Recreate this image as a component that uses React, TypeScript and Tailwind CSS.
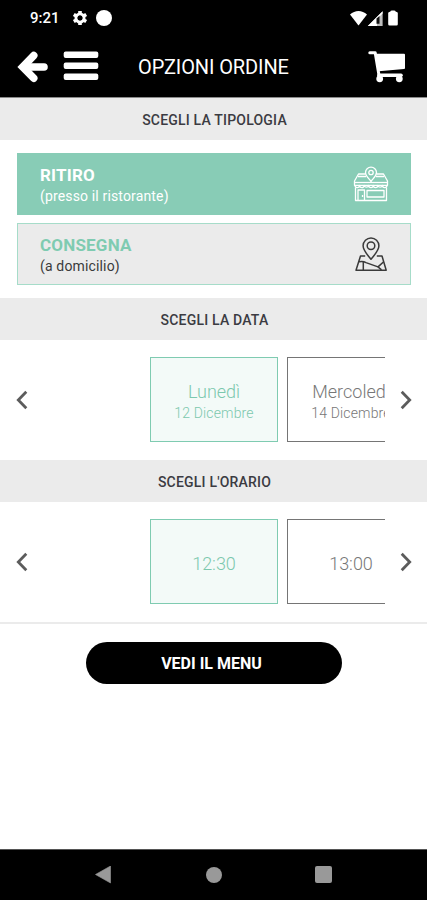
import { useState } from 'react'
import clsx from 'clsx'

interface Slot {
  id: string
  title: string
  subtitle?: string
}

const DATES: Slot[] = [
  { id: '12', title: 'Lunedì', subtitle: '12 Dicembre' },
  { id: '14', title: 'Mercoledì', subtitle: '14 Dicembre' },
]

const TIMES: Slot[] = [
  { id: '1230', title: '12:30' },
  { id: '1300', title: '13:00' },
]

function StatusBar() {
  return (
    <div className="flex h-9 items-center pl-[30px] pr-[29px] text-white">
      <span className="w-[42px] text-[15px] font-medium">9:21</span>
      <svg className="h-4 w-4" viewBox="0 0 16 16">
        <circle cx="8" cy="8" r="4" fill="none" stroke="currentColor" strokeWidth="3" />
        <g stroke="currentColor" strokeWidth="3.6">
          <path d="M8 .9v3M8 12.1v3M1.8 4.45l2.6 1.5M11.6 10.05l2.6 1.5M1.8 11.55l2.6-1.5M11.6 5.95l2.6-1.5" />
        </g>
        <circle cx="8" cy="8" r="2.4" fill="#000" />
      </svg>
      <span className="ml-2 h-4 w-4 rounded-full bg-white" />
      <svg className="ml-auto h-[15px] w-[17px]" viewBox="0 0 17 15">
        <path d="M0 3.6C5-1.1 12-1.1 17 3.6L8.5 14.5z" fill="currentColor" />
      </svg>
      <svg className="h-[15px] w-4" viewBox="0 0 16 15">
        <path d="M.8 15L15.6.3V15z" fill="#bdbdbd" />
        <path d="M.8 15L15.6.3v2.2L10 8v7z" fill="#fff" />
        <path d="M9.5 7.5L12.5 5v7.8h-3z" fill="#111" />
      </svg>
      <svg className="ml-[5px] h-4 w-[10px]" viewBox="0 0 10 16">
        <path d="M2.2 1.7Q2.5.5 4 .5h2q1.5 0 1.8 1.2A1.8 1.8 0 0 1 9.8 3.8v10.4A1.3 1.3 0 0 1 8.5 15.5h-7A1.3 1.3 0 0 1 .2 14.2V3.8A1.8 1.8 0 0 1 2.2 1.7z" fill="currentColor" />
      </svg>
    </div>
  )
}

function Header() {
  return (
    <div className="flex h-[61px] items-center pl-[17px] pr-[21px] text-white">
      <button aria-label="Indietro">
        <svg className="h-8 w-8" viewBox="0 0 32 32" fill="none" stroke="currentColor" strokeWidth="7.6" strokeLinecap="round">
          <path d="M16.7 4.6L5.7 16l11 11.2" />
          <path d="M8 16h19" />
        </svg>
      </button>
      <button aria-label="Menu" className="ml-[14px]">
        <svg className="h-8 w-9" viewBox="0 0 36 32" fill="currentColor">
          <rect x=".7" y=".5" width="34.6" height="6.4" rx="2" />
          <rect x=".7" y="11.5" width="34.6" height="6.6" rx="2" />
          <rect x=".7" y="22.5" width="34.6" height="6.6" rx="2" />
        </svg>
      </button>
      <h1 className="ml-[39px] whitespace-nowrap text-[20px] tracking-[-0.1px]">OPZIONI ORDINE</h1>
      <button aria-label="Carrello" className="ml-auto">
        <svg className="h-8 w-[38px]" viewBox="0 0 38 32" fill="none" stroke="currentColor">
          <path d="M1.8 1.8h5.4l4 23.7" strokeWidth="3" strokeLinecap="round" strokeLinejoin="round" />
          <path d="M8 2.8H36a1 1 0 0 1 1 1v13.2a1 1 0 0 1-.9 1L10.8 20.3z" fill="currentColor" stroke="none" />
          <path d="M11 24.2h22" strokeWidth="3.6" strokeLinecap="round" />
          <circle cx="11.7" cy="27.8" r="3.4" fill="currentColor" stroke="none" />
          <circle cx="31.3" cy="27.8" r="3.4" fill="currentColor" stroke="none" />
        </svg>
      </button>
    </div>
  )
}

function SectionTitle({ children }: { children: string }) {
  return (
    <h2 className="flex h-[42px] items-center justify-center bg-[#ebebeb] pl-[2px] pt-[2px] text-[14px] font-medium tracking-[0.2px] text-[#3b3b42]">
      {children}
    </h2>
  )
}

function StoreIcon() {
  return (
    <svg className="h-9 w-9" viewBox="0 0 36 36" fill="none" stroke="currentColor" strokeWidth="1.3" strokeLinejoin="round">
      <path d="M12.5 8H5.5L1.500 15v4.300h33V15L30.500 8h-7" />
      <path d="M5 10.500h8M23 10.500h8" />
      <path d="M18 15.500c-2.500-3.500-5.500-5.500-5.500-8.900a5.500 5.500 0 0 1 11 0c0 3.400-3 5.400-5.500 8.900z" />
      <circle cx="18" cy="6.5" r="2.2" />
      <path d="M2 16.500h32" />
      <path d="M2 19.3a2.3 2.3 0 0 0 4.6 0 2.3 2.3 0 0 0 4.6 0 2.3 2.3 0 0 0 4.5 0 2.3 2.3 0 0 0 4.6 0 2.3 2.3 0 0 0 4.6 0 2.3 2.3 0 0 0 4.5 0 2.3 2.3 0 0 0 4.6 0" />
      <path d="M2.5 21.5v13h31v-13" />
      <path d="M5 34V24h6.5v10M9.5 29v2" />
      <path d="M14 24.500h17v6.500H14z" />
    </svg>
  )
}

function MapIcon() {
  return (
    <svg className="h-9 w-9" viewBox="0 0 36 36" fill="none" stroke="currentColor" strokeWidth="1.5" strokeLinejoin="round">
      <path d="M18 23.300c-3.800-5-7.900-8.600-7.900-13.500a7.900 7.900 0 0 1 15.800 0c0 4.900-4.100 8.500-7.900 13.500z" />
      <circle cx="18" cy="9.700" r="3.800" />
      <path d="M12.200 20H7.500L3 34.200h30.200L29 20h-5.200" />
      <path d="M6 25.800q4-1 7 .8l12 4.300 5.700-5.200" />
      <path d="M10.300 25.700v8.300M25 30.900l3.500 3" />
    </svg>
  )
}

interface OptionProps {
  title: string
  note: string
  icon: React.ReactNode
  selected: boolean
  onClick: () => void
}

function OrderOption({ title, note, icon, selected, onClick }: OptionProps) {
  return (
    <button
      onClick={onClick}
      className={clsx(
        'flex h-[62px] w-full items-center justify-between border pl-[22px] pr-[21px] text-left',
        selected ? 'border-[#88ccb6] bg-[#88ccb6] text-white' : 'border-[#a6dcc9] bg-[#ebebeb] text-[#3a3a3a]'
      )}
    >
      <span className="flex flex-col pt-[2px]">
        <span className={clsx('text-[17px] font-bold leading-[22px] tracking-[0.2px]', !selected && 'text-[#7fcbb1]')}>{title}</span>
        <span className="text-[14px] leading-5 tracking-[0.15px]">{note}</span>
      </span>
      {icon}
    </button>
  )
}

interface PickerProps {
  slots: Slot[]
  value: string
  onChange: (id: string) => void
}

function SlotPicker({ slots, value, onChange }: PickerProps) {
  return (
    <div className="flex h-[120px] items-center">
      <button aria-label="Precedente" className="flex w-[43px] justify-center">
        <svg className="h-5 w-3" viewBox="0 0 12 20" fill="none" stroke="#5c5c5c" strokeWidth="2.8">
          <path d="M10.3 1.7L2.3 10l8 8.3" />
        </svg>
      </button>
      <div className="flex w-[342px] gap-[9px] overflow-hidden pb-px pl-[107px]">
        {slots.map(slot => (
          <button
            key={slot.id}
            onClick={() => onChange(slot.id)}
            className={clsx(
              'flex h-[85px] w-32 shrink-0 flex-col items-center justify-center border pt-1',
              slot.id === value ? 'border-[#7fcbb1] bg-[#f3faf8] text-[#7cc8ae]' : 'border-[#757575] bg-white text-[#777]'
            )}
          >
            <span className="text-[18px] font-light leading-[22px]">{slot.title}</span>
            {slot.subtitle && <span className="text-[14px] font-light leading-5 tracking-[0.15px]">{slot.subtitle}</span>}
          </button>
        ))}
      </div>
      <button aria-label="Successivo" className="flex w-[42px] justify-center">
        <svg className="h-5 w-3" viewBox="0 0 12 20" fill="none" stroke="#5c5c5c" strokeWidth="2.8">
          <path d="M1.7 1.7L9.7 10l-8 8.3" />
        </svg>
      </button>
    </div>
  )
}

function NavigationBar() {
  return (
    <div className="mt-auto flex h-[51px] items-center justify-between border-t border-[#555] bg-black pl-[94px] pr-[95px] text-[#999]">
      <svg className="h-[18px] w-[18px]" viewBox="0 0 18 18">
        <path d="M1.5 8.5L16.5 0v17z" fill="currentColor" stroke="currentColor" strokeWidth=".6" strokeLinejoin="round" />
      </svg>
      <span className="h-4 w-4 rounded-full bg-[#999]" />
      <span className="mb-px h-[17px] w-[17px] rounded-[2px] bg-[#999]" />
    </div>
  )
}

export default function App() {
  const [type, setType] = useState('ritiro')
  const [date, setDate] = useState('12')
  const [time, setTime] = useState('1230')

  return (
    <div className="flex h-[900px] w-[427px] flex-col bg-white font-[Roboto,sans-serif]">
      <div className="h-[98px] shrink-0 border-b border-[#8a8a8a] bg-black">
        <StatusBar />
        <Header />
      </div>

      <SectionTitle>SCEGLI LA TIPOLOGIA</SectionTitle>
      <div className="flex h-[158px] flex-col gap-2 pl-[17px] pr-4 pt-[13px]">
        <OrderOption
          title="RITIRO"
          note="(presso il ristorante)"
          icon={<StoreIcon />}
          selected={type === 'ritiro'}
          onClick={() => setType('ritiro')}
        />
        <OrderOption
          title="CONSEGNA"
          note="(a domicilio)"
          icon={<MapIcon />}
          selected={type === 'consegna'}
          onClick={() => setType('consegna')}
        />
      </div>

      <SectionTitle>SCEGLI LA DATA</SectionTitle>
      <SlotPicker slots={DATES} value={date} onChange={setDate} />

      <SectionTitle>SCEGLI L'ORARIO</SectionTitle>
      <SlotPicker slots={TIMES} value={time} onChange={setTime} />

      {/* Confirm */}
      <div className="flex justify-center border-t-2 border-[#ebebeb] pt-[18px]">
        <button className="h-[42px] w-64 rounded-full bg-black pr-1 pt-px text-[16px] font-bold text-white">VEDI IL MENU</button>
      </div>

      <NavigationBar />
    </div>
  )
}
